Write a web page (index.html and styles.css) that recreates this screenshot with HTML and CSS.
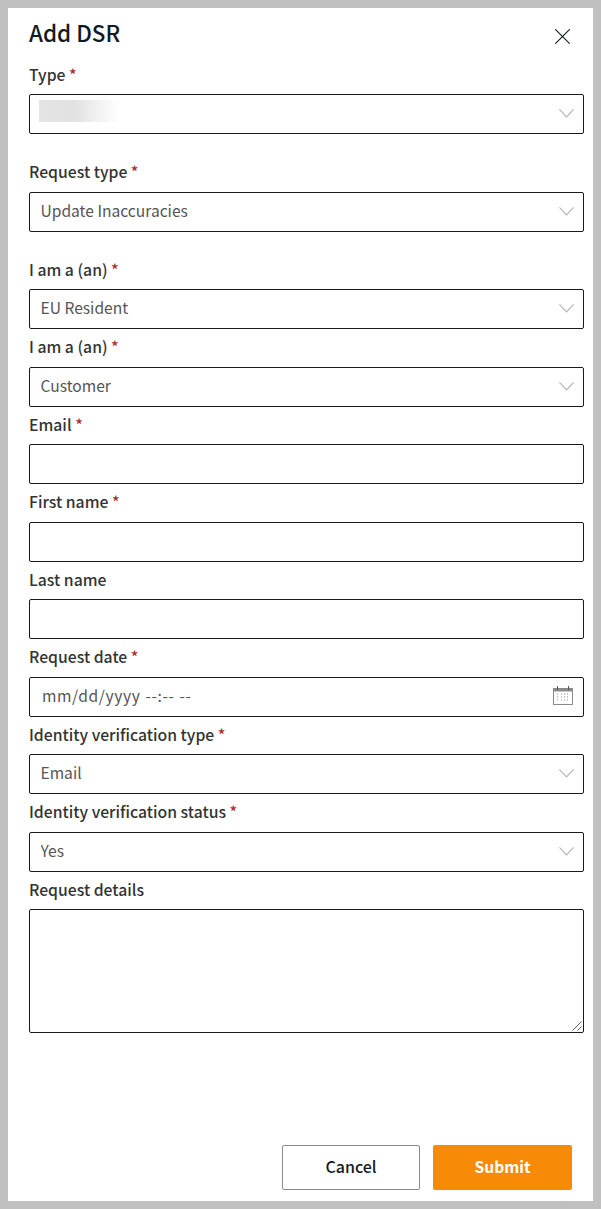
FILE: index.html
```html
<!DOCTYPE html>
<html lang="en">
<head>
    <meta charset="UTF-8">
    <meta name="viewport" content="width=device-width, initial-scale=1.0">
    <title>Add DSR</title>
    <link rel="stylesheet" href="styles.css">
</head>
<body>

<div class="panel">
    <div class="panel-head">
        <h2>Add DSR</h2>
        <button class="close-btn" type="button" aria-label="Close">
            <svg width="15" height="15" viewBox="0 0 15 15"><path d="M.3.3l14.4 14.4M14.7.3L.3 14.7" stroke="#111a24" stroke-width="1.1" fill="none"/></svg>
        </button>
    </div>

    <form class="dsr-form">
        <div class="field field-wide">
            <label>Type <span class="req">*</span></label>
            <div class="control">
                <select><option></option></select>
                <span class="blurred"></span>
                <svg class="chevron" width="15" height="9" viewBox="0 0 15 9"><path d="M.4.4l7.1 7.6L14.6.4" stroke="#b3b3b3" stroke-width="1.1" fill="none"/></svg>
            </div>
        </div>
        <div class="field field-wide">
            <label>Request type <span class="req">*</span></label>
            <div class="control">
                <select><option>Update Inaccuracies</option></select>
                <svg class="chevron" width="15" height="9" viewBox="0 0 15 9"><path d="M.4.4l7.1 7.6L14.6.4" stroke="#b3b3b3" stroke-width="1.1" fill="none"/></svg>
            </div>
        </div>
        <div class="field">
            <label>I am a (an) <span class="req">*</span></label>
            <div class="control">
                <select><option>EU Resident</option></select>
                <svg class="chevron" width="15" height="9" viewBox="0 0 15 9"><path d="M.4.4l7.1 7.6L14.6.4" stroke="#b3b3b3" stroke-width="1.1" fill="none"/></svg>
            </div>
        </div>
        <div class="field">
            <label>I am a (an) <span class="req">*</span></label>
            <div class="control">
                <select><option>Customer</option></select>
                <svg class="chevron" width="15" height="9" viewBox="0 0 15 9"><path d="M.4.4l7.1 7.6L14.6.4" stroke="#b3b3b3" stroke-width="1.1" fill="none"/></svg>
            </div>
        </div>
        <div class="field">
            <label>Email <span class="req">*</span></label>
            <div class="control"><input type="text"></div>
        </div>
        <div class="field">
            <label>First name <span class="req">*</span></label>
            <div class="control"><input type="text"></div>
        </div>
        <div class="field">
            <label>Last name</label>
            <div class="control"><input type="text"></div>
        </div>
        <div class="field">
            <label>Request date <span class="req">*</span></label>
            <div class="control">
                <input class="date-input" type="text" placeholder="mm/dd/yyyy --:-- --">
                <svg class="calendar" width="20" height="19" viewBox="0 0 20 19">
                    <rect x=".5" y="2.5" width="19" height="16" fill="none" stroke="#8a8a8a"/>
                    <path d="M.5 3h19v2.5H.5z" fill="#8a8a8a"/>
                    <path d="M4.5 0v4M15.5 0v4" stroke="#555"/>
                    <path d="M4 8h2M8 8h1M11 8h1M14 8h2M4 11h2M8 11h1M11 11h1M14 11h2M4 14h2M8 14h1M11 14h1M14 14h2" stroke="#8a8a8a" stroke-dasharray="1 1"/>
                </svg>
            </div>
        </div>
        <div class="field">
            <label>Identity verification type <span class="req">*</span></label>
            <div class="control">
                <select><option>Email</option></select>
                <svg class="chevron" width="15" height="9" viewBox="0 0 15 9"><path d="M.4.4l7.1 7.6L14.6.4" stroke="#b3b3b3" stroke-width="1.1" fill="none"/></svg>
            </div>
        </div>
        <div class="field">
            <label>Identity verification status <span class="req">*</span></label>
            <div class="control">
                <select><option>Yes</option></select>
                <svg class="chevron" width="15" height="9" viewBox="0 0 15 9"><path d="M.4.4l7.1 7.6L14.6.4" stroke="#b3b3b3" stroke-width="1.1" fill="none"/></svg>
            </div>
        </div>
        <div class="field">
            <label>Request details</label>
            <div class="control">
                <textarea></textarea>
                <svg class="grip" width="10" height="10" viewBox="0 0 10 10"><path d="M.5 9.5l9-9M5.5 9.5l4-4" stroke="#5f5f5f" fill="none"/></svg>
            </div>
        </div>
    </form>

    <div class="panel-foot">
        <button class="btn btn-cancel" type="button">Cancel</button>
        <button class="btn btn-submit" type="button">Submit</button>
    </div>
</div>

</body>
</html>
```

FILE: styles.css
```css
html, body {
    height: 100%;
}

body {
    margin: 0;
    padding: 8px;
    box-sizing: border-box;
    background: #c0c0c0;
    font-family: "Noto Sans CJK JP", "Noto Sans", sans-serif;
    color: #1f1f1f;
    overflow: hidden;
}

.panel {
    background: #fff;
    height: 100%;
    padding: 0 9px 11px 21px;
    box-sizing: border-box;
    display: flex;
    flex-direction: column;
}

.panel-head {
    height: 48.5px;
    display: flex;
    justify-content: space-between;
    align-items: flex-start;
}

.panel-head h2 {
    margin: 8px 0 0;
    font-size: 22.4px;
    line-height: 33px;
    font-weight: 500;
    color: #111a24;
}

.close-btn {
    border: none;
    background: none;
    padding: 0;
    margin: 21px 14px 0 0;
    width: 15px;
    height: 15px;
    display: flex;
}

.dsr-form {
    flex: 1;
}

.field {
    width: 555px;
}

.field-wide {
    margin-bottom: 20px;
}

.field label {
    display: block;
    height: 37.5px;
    font-size: 15.75px;
    line-height: 35.5px;
    font-weight: 500;
    color: #333;
}

.req {
    color: #b02a30;
}

.control {
    position: relative;
    display: flex;
}

select,
input,
textarea {
    width: 100%;
    height: 40px;
    box-sizing: border-box;
    border: 1px solid #1a1a1a;
    border-radius: 2px;
    background: #fff;
    font-family: inherit;
    font-size: 15.6px;
    color: #555;
    outline: none;
    margin: 0;
}

select {
    appearance: none;
    padding: 0 10.5px 4px;
}

input {
    padding: 0 11px;
}

textarea {
    height: 124px;
    padding: 8px 11px;
    display: block;
    resize: none;
}

.date-input {
    padding: 0 12px 3px;
    letter-spacing: 0.6px;
    word-spacing: 1px;
}

.date-input::placeholder {
    color: #555;
    opacity: 1;
}

.chevron {
    position: absolute;
    top: 15px;
    right: 10px;
    pointer-events: none;
}

.calendar {
    position: absolute;
    top: 9px;
    right: 11px;
    pointer-events: none;
}

.grip {
    position: absolute;
    right: 2px;
    bottom: 2px;
    pointer-events: none;
}

.blurred {
    position: absolute;
    left: 10px;
    top: 6px;
    width: 80px;
    height: 22px;
    background: linear-gradient(90deg, #e4e4e4 0%, #e2e2e2 45%, #fff 100%);
}

.panel-foot {
    display: flex;
    justify-content: flex-end;
    gap: 13px;
    padding-right: 12px;
}

.btn {
    height: 45px;
    box-sizing: border-box;
    border-radius: 2px;
    font-family: inherit;
    font-size: 16px;
    font-weight: 500;
    padding: 0 0 3px;
}

.btn-cancel {
    width: 138px;
    background: #fff;
    border: 1px solid #8c8c8c;
    color: #111a24;
}

.btn-submit {
    width: 139px;
    background: #f78b07;
    border: none;
    color: #fff;
    font-size: 15.6px;
    font-weight: 700;
}
```
